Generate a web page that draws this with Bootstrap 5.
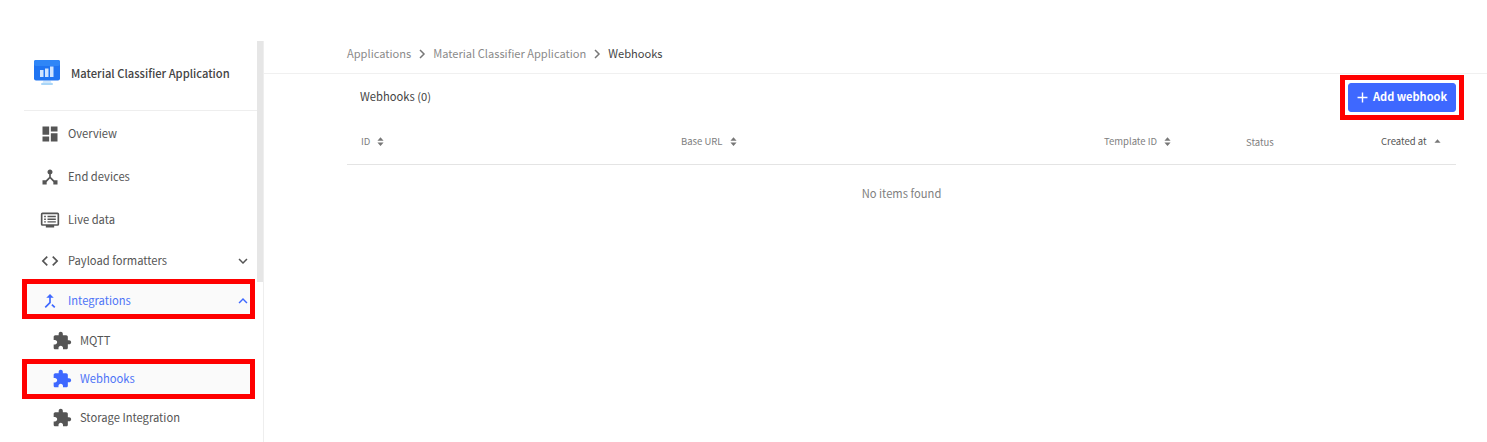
<!DOCTYPE html>
<html lang="en">
<head>
  <meta charset="UTF-8" />
  <meta name="viewport" content="width=device-width, initial-scale=1" />
  <title>Webhooks</title>
  <link href="https://cdn.jsdelivr.net/npm/bootstrap@5.3.0/dist/css/bootstrap.min.css" rel="stylesheet" />
  <style>
    body {
      font-family: "Noto Sans CJK SC", "Liberation Sans", sans-serif;
      font-size: 11.2px;
      line-height: 1.2;
      color: #555;
      background: #fff;
      height: 442px;
      overflow: hidden;
    }

    .page-wrap { height: 442px; }

    /* sidebar */
    .side-panel {
      width: 264px;
      flex: none;
      margin-top: 41px;
      border-right: 1px solid #eee;
    }
    .side-inner { width: 257px; flex: none; }
    .side-thumb { width: 6px; height: 241px; flex: none; background: #e6e6e6; }

    .app-head {
      height: 70px;
      margin-left: 24px;
      padding-left: 10px;
      gap: 11px;
      border-bottom: 1px solid #eee;
      font-weight: 500;
      color: #444;
    }
    .app-logo { margin-top: -6px; }
    .app-name { margin-top: -4px; }

    .side-row { padding: 2px 5px 0 40px; color: #555; }
    .side-row .ico { width: 20px; height: 20px; fill: #555; flex: none; margin-right: 8px; }
    .row-tall { height: 43px; }
    .row-short { height: 42px; padding-top: 4px; }
    .row-mid { height: 40px; padding-top: 4px; }
    .row-sub { padding-left: 52px; }
    .row-end { height: 38px; padding-top: 0; }
    .chev { width: 18px; height: 18px; fill: #555; margin-left: auto; }

    .row-flag {
      margin-left: 22px;
      margin-right: 2px;
      padding-left: 13px;
      padding-right: 0;
      border: 5px solid #f00;
      background: #fafafa;
      color: #4d73f7;
    }
    .row-flag .ico, .row-flag .chev { fill: #3e68ff; }
    .row-flag .chev { margin-right: -2px; }
    .row-sub.row-flag { padding-left: 25px; padding-top: 0; padding-bottom: 1px; height: 40px; }

    /* main */
    .crumb-bar {
      height: 74px;
      padding: 34px 0 0 83px;
      border-bottom: 1px solid #f0f0f0;
      color: #8a8a8a;
      font-size: 11.1px;
      gap: 7.5px;
    }
    .crumb-bar .here { color: #444; }
    .crumb-sep { width: 7px; height: 10px; }

    .main-body { padding: 0 31px 0 83px; }
    .hook-head { height: 46px; padding-left: 13px; color: #444; }

    .flag-box { border: 5px solid #f00; padding: 3px; margin-right: -8px; }
    .add-btn {
      background: #3e68ff;
      border: 1px solid #3e68ff;
      border-radius: 3px;
      color: #fff;
      font-weight: 700;
      font-size: 11px;
      height: 29px;
      width: 108px;
      padding: 0 0 0 5px;
      gap: 2px;
      white-space: nowrap;
    }
    .add-btn svg { width: 17px; height: 17px; fill: #fff; }

    .hook-table { table-layout: fixed; width: 1109px; margin: 0; font-size: 9.5px; }
    .hook-table th {
      height: 44px;
      padding: 0 0 0 14px;
      font-weight: 400;
      color: #808080;
      border-bottom: 1px solid #e4e4e4;
      vertical-align: middle;
    }
    .hook-table th.now { color: #555; }
    .hook-table th.low { padding-top: 2px; }
    .hook-table td {
      height: 58px;
      border: 0;
      padding: 0;
      text-align: center;
      vertical-align: middle;
      font-size: 11.2px;
      color: #808080;
    }
    .sort-ico { width: 7px; height: 9px; margin-left: 5px; fill: #777; vertical-align: -1px; }
  </style>
</head>
<body>
  <div class="page-wrap d-flex">
    <!-- Sidebar -->
    <aside class="side-panel d-flex">
      <div class="side-inner">
        <div class="app-head d-flex align-items-center">
          <svg class="app-logo" width="26" height="25" viewBox="0 0 26 25">
            <path d="M9.5 20.5h7l1 2.5h-9z" fill="#cfe6fb"/>
            <rect x="7" y="23" width="12" height="2" rx="1" fill="#a9d6f8"/>
            <rect x="0" y="0" width="26" height="20.5" rx="2" fill="#1f74f2"/>
            <rect x="0" y="0" width="26" height="6" rx="2" fill="#2f86f7"/>
            <rect x="6" y="10" width="3.5" height="7" fill="#cfe4ff"/>
            <rect x="11" y="8.5" width="3.5" height="8.5" fill="#cfe4ff"/>
            <rect x="16" y="6.5" width="3.5" height="10.5" fill="#cfe4ff"/>
          </svg>
          <span class="app-name">Material Classifier Application</span>
        </div>

        <div class="side-row row-tall d-flex align-items-center">
          <svg class="ico" viewBox="0 0 24 24"><path d="M3 13h8V3H3v10zm0 8h8v-6H3v6zm10 0h8V11h-8v10zm0-18v6h8V3h-8z"/></svg>
          Overview
        </div>
        <div class="side-row row-tall d-flex align-items-center">
          <svg class="ico" viewBox="0 0 24 24"><path d="M17 16l-4-4V8.82C14.16 8.4 15 7.3 15 6c0-1.66-1.34-3-3-3S9 4.34 9 6c0 1.3.84 2.4 2 2.82V12l-4 4H3v5h5v-3.05l4-4.2 4 4.2V21h5v-5h-4z"/></svg>
          End devices
        </div>
        <div class="side-row row-short d-flex align-items-center">
          <svg class="ico" viewBox="0 0 24 24"><path d="M3 3h18a2 2 0 0 1 2 2v12a2 2 0 0 1-2 2h-4v2H7v-2H3a2 2 0 0 1-2-2V5a2 2 0 0 1 2-2zm0 2v12h18V5zm2 2h2v1.7H5zm4 0h10v1.7H9zm-4 3.2h2v1.7H5zm4 0h10v1.7H9zm-4 3.2h2v1.7H5zm4 0h10v1.7H9z"/></svg>
          Live data
        </div>
        <div class="side-row row-mid d-flex align-items-center">
          <svg class="ico" viewBox="0 0 24 24"><path d="M9.4 16.6L4.8 12l4.6-4.6L8 6l-6 6 6 6 1.4-1.4zm5.2 0l4.6-4.6-4.6-4.6L16 6l6 6-6 6-1.4-1.4z"/></svg>
          Payload formatters
          <svg class="chev" viewBox="0 0 24 24"><path d="M16.59 8.59L12 13.17 7.41 8.59 6 10l6 6 6-6z"/></svg>
        </div>
        <div class="side-row row-mid row-flag d-flex align-items-center">
          <svg class="ico" viewBox="0 0 24 24"><path d="M17 20.41L18.41 19 15 15.59 13.59 17 17 20.41zM7.5 8H11v5.59L5.59 19 7 20.41l6-6V8h3.5L12 3.5 7.5 8z"/></svg>
          Integrations
          <svg class="chev" viewBox="0 0 24 24"><path d="M12 8l-6 6 1.41 1.41L12 10.83l4.59 4.58L18 14z"/></svg>
        </div>
        <div class="side-row row-mid row-sub d-flex align-items-center">
          <svg class="ico" viewBox="0 0 24 24"><path d="M20.5 11H19V7c0-1.1-.9-2-2-2h-4V3.5C13 2.12 11.88 1 10.5 1S8 2.12 8 3.5V5H4c-1.1 0-1.99.9-1.99 2v3.8H3.5c1.49 0 2.7 1.21 2.7 2.7s-1.21 2.7-2.7 2.7H2V20c0 1.1.9 2 2 2h3.8v-1.5c0-1.49 1.21-2.7 2.7-2.7 1.49 0 2.7 1.21 2.7 2.7V22H17c1.1 0 2-.9 2-2v-4h1.5c1.38 0 2.5-1.12 2.5-2.5S21.88 11 20.5 11z"/></svg>
          MQTT
        </div>
        <div class="side-row row-sub row-flag d-flex align-items-center">
          <svg class="ico" viewBox="0 0 24 24"><path d="M20.5 11H19V7c0-1.1-.9-2-2-2h-4V3.5C13 2.12 11.88 1 10.5 1S8 2.12 8 3.5V5H4c-1.1 0-1.99.9-1.99 2v3.8H3.5c1.49 0 2.7 1.21 2.7 2.7s-1.21 2.7-2.7 2.7H2V20c0 1.1.9 2 2 2h3.8v-1.5c0-1.49 1.21-2.7 2.7-2.7 1.49 0 2.7 1.21 2.7 2.7V22H17c1.1 0 2-.9 2-2v-4h1.5c1.38 0 2.5-1.12 2.5-2.5S21.88 11 20.5 11z"/></svg>
          Webhooks
        </div>
        <div class="side-row row-sub row-end d-flex align-items-center">
          <svg class="ico" viewBox="0 0 24 24"><path d="M20.5 11H19V7c0-1.1-.9-2-2-2h-4V3.5C13 2.12 11.88 1 10.5 1S8 2.12 8 3.5V5H4c-1.1 0-1.99.9-1.99 2v3.8H3.5c1.49 0 2.7 1.21 2.7 2.7s-1.21 2.7-2.7 2.7H2V20c0 1.1.9 2 2 2h3.8v-1.5c0-1.49 1.21-2.7 2.7-2.7 1.49 0 2.7 1.21 2.7 2.7V22H17c1.1 0 2-.9 2-2v-4h1.5c1.38 0 2.5-1.12 2.5-2.5S21.88 11 20.5 11z"/></svg>
          Storage Integration
        </div>
      </div>
      <div class="side-thumb"></div>
    </aside>

    <!-- Main -->
    <main class="flex-grow-1">
      <div class="crumb-bar d-flex align-items-center">
        <span>Applications</span>
        <svg class="crumb-sep" viewBox="0 0 7 10"><path d="M1 1l4 4-4 4" fill="none" stroke="#777" stroke-width="1.5"/></svg>
        <span>Material Classifier Application</span>
        <svg class="crumb-sep" viewBox="0 0 7 10"><path d="M1 1l4 4-4 4" fill="none" stroke="#777" stroke-width="1.5"/></svg>
        <span class="here">Webhooks</span>
      </div>
      <div class="main-body">
        <div class="hook-head d-flex align-items-center justify-content-between">
          <span>Webhooks (0)</span>
          <div class="flag-box">
            <button class="add-btn d-flex align-items-center">
              <svg viewBox="0 0 24 24"><path d="M19 13h-6v6h-2v-6H5v-2h6V5h2v6h6v2z"/></svg>
              Add webhook
            </button>
          </div>
        </div>
        <table class="table hook-table">
          <colgroup>
            <col style="width:320px"><col style="width:423px"><col style="width:142px"><col style="width:135px"><col style="width:89px">
          </colgroup>
          <thead>
            <tr>
              <th>ID <svg class="sort-ico" viewBox="0 0 8 10"><path d="M4 0l3.5 4h-7zM4 10L.5 6h7z"/></svg></th>
              <th>Base URL <svg class="sort-ico" viewBox="0 0 8 10"><path d="M4 0l3.5 4h-7zM4 10L.5 6h7z"/></svg></th>
              <th>Template ID <svg class="sort-ico" viewBox="0 0 8 10"><path d="M4 0l3.5 4h-7zM4 10L.5 6h7z"/></svg></th>
              <th class="low">Status</th>
              <th class="now">Created at <svg class="sort-ico" viewBox="0 0 8 10"><path d="M4 2.5l3.5 4h-7z"/></svg></th>
            </tr>
          </thead>
          <tbody>
            <tr><td colspan="5">No items found</td></tr>
          </tbody>
        </table>
      </div>
    </main>
  </div>
  <script src="https://cdn.jsdelivr.net/npm/bootstrap@5.3.0/dist/js/bootstrap.bundle.min.js"></script>
</body>
</html>
